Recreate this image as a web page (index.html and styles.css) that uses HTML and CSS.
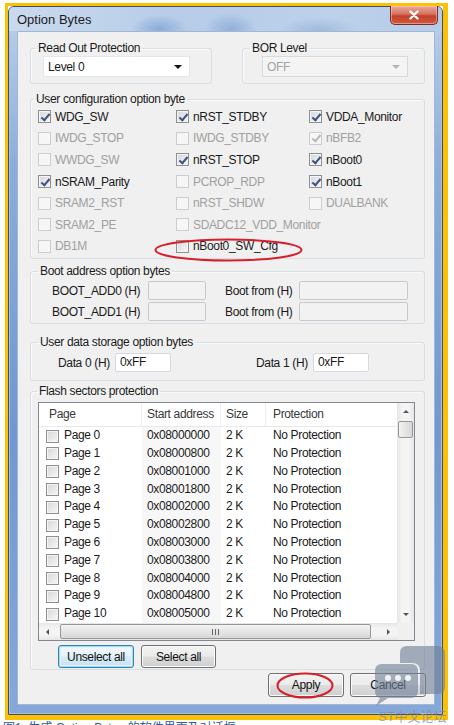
FILE: index.html
```html
<!DOCTYPE html>
<html lang="zh-CN">
<head>
    <meta charset="UTF-8">
    <meta name="viewport" content="width=device-width, initial-scale=1.0">
    <title>Option Bytes</title>
    <link rel="stylesheet" href="styles.css">
</head>
<body>
<div class="page">
    <div class="shot">
        <div class="window">
            <div class="titlebar">
                <span class="title">Option Bytes</span>
                <span class="close-btn">
                    <svg width="14" height="10" viewBox="0 0 14 10"><path d="M3.5 1.5 L10.5 8.5 M10.5 1.5 L3.5 8.5" stroke="#fff" stroke-width="2.4" stroke-linecap="round"/></svg>
                </span>
            </div>

            <div class="client">
                <!-- Read protection / BOR -->
                <div class="top-row">
                    <fieldset class="group rop">
                        <legend>Read Out Protection</legend>
                        <div class="combo"><span>Level 0</span><i class="combo-arrow"></i></div>
                    </fieldset>
                    <fieldset class="group bor">
                        <legend>BOR Level</legend>
                        <div class="combo disabled"><span>OFF</span><i class="combo-arrow"></i></div>
                    </fieldset>
                </div>

                <!-- User option bits -->
                <fieldset class="group user-cfg">
                    <legend>User configuration option byte</legend>
                    <div class="check-grid">
                        <label class="check"><span class="box checked"></span>WDG_SW</label>
                        <label class="check"><span class="box checked"></span>nRST_STDBY</label>
                        <label class="check"><span class="box checked"></span>VDDA_Monitor</label>

                        <label class="check off"><span class="box"></span>IWDG_STOP</label>
                        <label class="check off"><span class="box"></span>IWDG_STDBY</label>
                        <label class="check off"><span class="box checked"></span>nBFB2</label>

                        <label class="check off"><span class="box"></span>WWDG_SW</label>
                        <label class="check"><span class="box checked"></span>nRST_STOP</label>
                        <label class="check"><span class="box checked"></span>nBoot0</label>

                        <label class="check"><span class="box checked"></span>nSRAM_Parity</label>
                        <label class="check off"><span class="box"></span>PCROP_RDP</label>
                        <label class="check"><span class="box checked"></span>nBoot1</label>

                        <label class="check off"><span class="box"></span>SRAM2_RST</label>
                        <label class="check off"><span class="box"></span>nRST_SHDW</label>
                        <label class="check off"><span class="box"></span>DUALBANK</label>

                        <label class="check off"><span class="box"></span>SRAM2_PE</label>
                        <label class="check off"><span class="box"></span>SDADC12_VDD_Monitor</label>
                        <span></span>

                        <label class="check off"><span class="box"></span>DB1M</label>
                        <label class="check"><span class="box"></span>nBoot0_SW_Cfg</label>
                        <span></span>
                    </div>
                </fieldset>

                <!-- Boot addresses -->
                <fieldset class="group boot">
                    <legend>Boot address option bytes</legend>
                    <div class="field-row">
                        <span class="lbl lbl-boot">BOOT_ADD0 (H)</span>
                        <span class="edit disabled w-add"></span>
                        <span class="lbl lbl-from">Boot from (H)</span>
                        <span class="edit disabled w-from"></span>
                    </div>
                    <div class="field-row">
                        <span class="lbl lbl-boot">BOOT_ADD1 (H)</span>
                        <span class="edit disabled w-add"></span>
                        <span class="lbl lbl-from">Boot from (H)</span>
                        <span class="edit disabled w-from"></span>
                    </div>
                </fieldset>

                <!-- User data -->
                <fieldset class="group data">
                    <legend>User data storage option bytes</legend>
                    <div class="field-row">
                        <span class="lbl lbl-data">Data 0 (H)</span>
                        <span class="edit w-data">0xFF</span>
                        <span class="lbl lbl-data2">Data 1 (H)</span>
                        <span class="edit w-data">0xFF</span>
                    </div>
                </fieldset>

                <!-- Write protection per page -->
                <fieldset class="group flash">
                    <legend>Flash sectors protection</legend>
                    <div class="list">
                        <div class="list-body">
                            <div class="lv-head">
                                <span class="c-page">Page</span>
                                <span class="c-addr">Start address</span>
                                <span class="c-size">Size</span>
                                <span class="c-prot">Protection</span>
                            </div>
                            <div class="lv-row"><span class="c-page"><i class="box"></i>Page 0</span><span class="c-addr">0x08000000</span><span class="c-size">2 K</span><span class="c-prot">No Protection</span></div>
                            <div class="lv-row"><span class="c-page"><i class="box"></i>Page 1</span><span class="c-addr">0x08000800</span><span class="c-size">2 K</span><span class="c-prot">No Protection</span></div>
                            <div class="lv-row"><span class="c-page"><i class="box"></i>Page 2</span><span class="c-addr">0x08001000</span><span class="c-size">2 K</span><span class="c-prot">No Protection</span></div>
                            <div class="lv-row"><span class="c-page"><i class="box"></i>Page 3</span><span class="c-addr">0x08001800</span><span class="c-size">2 K</span><span class="c-prot">No Protection</span></div>
                            <div class="lv-row"><span class="c-page"><i class="box"></i>Page 4</span><span class="c-addr">0x08002000</span><span class="c-size">2 K</span><span class="c-prot">No Protection</span></div>
                            <div class="lv-row"><span class="c-page"><i class="box"></i>Page 5</span><span class="c-addr">0x08002800</span><span class="c-size">2 K</span><span class="c-prot">No Protection</span></div>
                            <div class="lv-row"><span class="c-page"><i class="box"></i>Page 6</span><span class="c-addr">0x08003000</span><span class="c-size">2 K</span><span class="c-prot">No Protection</span></div>
                            <div class="lv-row"><span class="c-page"><i class="box"></i>Page 7</span><span class="c-addr">0x08003800</span><span class="c-size">2 K</span><span class="c-prot">No Protection</span></div>
                            <div class="lv-row"><span class="c-page"><i class="box"></i>Page 8</span><span class="c-addr">0x08004000</span><span class="c-size">2 K</span><span class="c-prot">No Protection</span></div>
                            <div class="lv-row"><span class="c-page"><i class="box"></i>Page 9</span><span class="c-addr">0x08004800</span><span class="c-size">2 K</span><span class="c-prot">No Protection</span></div>
                            <div class="lv-row"><span class="c-page"><i class="box"></i>Page 10</span><span class="c-addr">0x08005000</span><span class="c-size">2 K</span><span class="c-prot">No Protection</span></div>
                        </div>
                        <div class="vscroll">
                            <span class="sb-btn"><i class="tri up"></i></span>
                            <span class="sb-thumb v"></span>
                            <span class="sb-fill"></span>
                            <span class="sb-btn"><i class="tri down"></i></span>
                        </div>
                        <div class="hscroll">
                            <span class="sb-btn"><i class="tri left"></i></span>
                            <span class="sb-thumb h"><i class="grip"></i></span>
                            <span class="sb-fill"></span>
                            <span class="sb-btn"><i class="tri right"></i></span>
                        </div>
                        <div class="corner"></div>
                    </div>
                    <div class="btn-row">
                        <button class="btn focus w-unsel">Unselect all</button>
                        <button class="btn w-sel">Select all</button>
                    </div>
                </fieldset>

                <div class="dialog-btns">
                    <button class="btn w-dlg">Apply</button>
                    <button class="btn w-dlg">Cancel</button>
                </div>
            </div>
        </div>
    </div>
    <div class="caption">图1. 生成 Option Bytes 的软件界面及对话框</div>

    <!-- hand-drawn marks over the dialog -->
    <svg class="marks" width="454" height="725" viewBox="0 0 454 725">
        <ellipse cx="228.5" cy="247" rx="73" ry="10.5" fill="none" stroke="#d71f2b" stroke-width="2"/>
        <ellipse cx="305" cy="682.5" rx="27.5" ry="12" fill="none" stroke="#d71f2b" stroke-width="2"/>
        <g fill="#6f7f96" fill-opacity="0.62">
            <path d="M407 643 H437 Q445 643 445 651 V684 Q445 691 438 691 H420 V668 Q420 660 412 660 H400 V650 Q400 643 407 643 Z"/>
            <path d="M382 661 H411 Q418 661 418 668 V688 Q418 695 411 695 H388 L376 703 L380 695 Q375 694 375 688 V668 Q375 661 382 661 Z"/>
        </g>
        <g fill="#fff" fill-opacity="0.85">
            <circle cx="388" cy="675" r="3"/>
            <circle cx="398" cy="675" r="3"/>
            <circle cx="408" cy="675" r="3"/>
        </g>
    </svg>
    <span class="watermark">ST中文论坛</span>
</div>
</body>
</html>
```

FILE: styles.css
```css
* {
    box-sizing: border-box;
}
body {
    margin: 0;
    width: 454px;
    height: 725px;
    overflow: hidden;
    background: #fff;
    font-family: "Liberation Sans", Arial, sans-serif;
    font-size: 12px;
    letter-spacing: -0.35px;
    color: #1a1a1a;
}
.page {
    position: relative;
    width: 454px;
    height: 725px;
}
.shot {
    margin: 3px 0 0 5px;
    width: 443px;
    height: 717px;
    border: solid #fcc102;
    border-width: 3px 5px 5px 3px;
}

/* Aero window frame */
.window {
    height: 100%;
    display: flex;
    flex-direction: column;
    padding: 0 7px 9px 8px;
    border: 1px solid #3f4d66;
    border-radius: 6px 6px 0 0;
    background: linear-gradient(#c3d6ed 0, #b3cae7 30px, #8cadd9 160px, #7098d0 60%, #86a8d9 100%);
    box-shadow: inset 1px 0 0 #a9c1e4, inset -1px 0 0 #a9c1e4, inset 0 -1px 0 #a9c1e4;
}
.titlebar {
    position: relative;
    height: 24px;
    margin: 0 -7px 0 -8px;
    padding: 1px 0 0 8px;
    background:
        radial-gradient(ellipse 28px 14px at 150px 22px, rgba(70, 120, 190, 0.4), transparent),
        radial-gradient(ellipse 26px 16px at 222px 22px, rgba(70, 120, 190, 0.35), transparent),
        radial-gradient(ellipse 40px 14px at 310px 24px, rgba(90, 130, 190, 0.3), transparent),
        linear-gradient(to right, #c9daee, #b6cce8 40%, #bdd1ea 75%, #b5cbe8);
    border-radius: 5px 5px 0 0;
}
.title {
    font-size: 13px;
    letter-spacing: 0;
    line-height: 23px;
    color: #1b1b1b;
}
.close-btn {
    position: absolute;
    top: -1px;
    right: 4px;
    width: 48px;
    height: 19px;
    display: flex;
    align-items: center;
    justify-content: center;
    border: 1px solid #7d2a20;
    border-top: none;
    border-radius: 0 0 5px 5px;
    background: linear-gradient(#e9a99b 0%, #d7725f 45%, #c2402a 55%, #d05a40 100%);
    box-shadow: inset 0 0 0 1px rgba(255, 210, 200, 0.5);
}

/* dialog body */
.client {
    flex: 1;
    display: flex;
    flex-direction: column;
    padding: 9px 9px 0 12px;
    background: #f0f0f0;
    border: 1px solid #a3b7d3;
}
.group {
    margin: 0;
    padding: 0;
    min-width: 0;
    border: 1px solid #d5dfe5;
    border-radius: 3px;
    box-shadow: inset 1px 1px 0 #fafafa;
}
.group legend {
    margin-left: 5px;
    padding: 0 2px;
    line-height: 14px;
    color: #1a1a1a;
}

.top-row {
    display: flex;
    justify-content: space-between;
}
.rop {
    width: 182px;
    padding-bottom: 6px;
}
.rop .combo {
    margin: 1px 0 0 12px;
}
.bor {
    width: 183px;
    padding-bottom: 6px;
}
.bor legend {
    margin-left: 7px;
}
.bor .combo {
    margin: 1px 0 0 19px;
}
.combo {
    display: flex;
    align-items: center;
    justify-content: space-between;
    width: 147px;
    height: 21px;
    padding: 0 7px 0 4px;
    background: #fff;
    border: 1px solid #e4e6ea;
}
.combo-arrow {
    width: 0;
    height: 0;
    border-left: 4px solid transparent;
    border-right: 4px solid transparent;
    border-top: 4px solid #111;
}
.combo.disabled {
    width: 146px;
    background: #f4f4f4;
    border-color: #d9d9d9;
    color: #a3a3a3;
}
.combo.disabled .combo-arrow {
    border-top-color: #b5b5b5;
}

/* option bit checkboxes */
.user-cfg {
    margin-top: 8px;
    padding-bottom: 1px;
}
.user-cfg legend {
    margin-left: 3px;
}
.check-grid {
    display: grid;
    grid-template-columns: 138px 133px 1fr;
    grid-auto-rows: 21.6px;
    padding-left: 7px;
}
.check {
    display: flex;
    align-items: center;
    gap: 4px;
    white-space: nowrap;
}
.check.off {
    color: #a0a0a0;
}
.box {
    position: relative;
    flex: none;
    display: inline-block;
    width: 13px;
    height: 13px;
    border: 1px solid #8e8f8f;
    background: linear-gradient(135deg, #d4d7dc, #f7f7f7);
    box-shadow: inset 0 0 0 1px #f4f4f4;
}
.off .box {
    border-color: #cdcdcd;
    background: #f6f6f6;
    box-shadow: none;
}
.box.checked::after {
    content: "";
    position: absolute;
    left: 3.5px;
    top: 0.5px;
    width: 3px;
    height: 7px;
    border: solid #3c5281;
    border-width: 0 2px 2px 0;
    transform: rotate(40deg);
}
.off .box.checked::after {
    border-color: #b9b9b9;
}

/* boot address + user data edits */
.boot {
    margin-top: 5px;
    padding: 3px 0 2px 21px;
}
.boot legend {
    margin-left: -14px;
}
.boot .field-row + .field-row {
    margin-top: 2px;
}
.field-row {
    display: flex;
    align-items: center;
    height: 19px;
}
.lbl {
    flex: none;
}
.lbl-boot {
    width: 96px;
}
.lbl-from {
    width: 74px;
    margin-left: 19px;
}
.edit {
    height: 19px;
    padding: 0 4px;
    line-height: 17px;
    background: #fff;
    border: 1px solid #d7d9de;
    border-radius: 2px;
}
.edit.disabled {
    background: #f2f2f2;
    border-color: #c8c9cc;
}
.w-add {
    width: 58px;
}
.w-from {
    width: 109px;
}
.w-data {
    width: 56px;
}
.data {
    margin-top: 11px;
    padding: 4px 0 8px 27px;
}
.data legend {
    margin-left: -20px;
}
.lbl-data {
    width: 57px;
}
.lbl-data2 {
    width: 57px;
    margin-left: 85px;
}

/* page list */
.flash {
    margin-top: 3px;
    padding: 4px 0 1px 7px;
}
.flash legend {
    margin-left: -1px;
}
.list {
    display: grid;
    grid-template-columns: 358px 17px;
    grid-template-rows: 220px 17px;
    width: 377px;
    border: 1px solid #828790;
    background: #fff;
}
.list-body {
    overflow: hidden;
}
.lv-head,
.lv-row {
    display: flex;
    white-space: nowrap;
}
.lv-head {
    height: 24px;
    line-height: 23px;
    color: #383838;
    border-bottom: 1px solid #e8eaee;
}
.lv-head span {
    border-right: 1px solid #eceef1;
}
.lv-row {
    height: 17.8px;
    line-height: 17.8px;
}
.c-page {
    width: 103px;
    flex: none;
    padding-left: 10px;
}
.c-addr {
    width: 79px;
    flex: none;
    padding-left: 5px;
}
.c-size {
    width: 45px;
    flex: none;
    padding-left: 5px;
}
.c-prot {
    flex: none;
    width: 140px;
    padding-left: 7px;
}
.lv-row .c-page {
    display: flex;
    align-items: center;
    gap: 5px;
    padding-left: 7px;
}
.lv-row .c-addr {
    background: #f7f7f7;
}
.lv-row .box {
    width: 13px;
    height: 13px;
}

/* scrollbars */
.vscroll,
.hscroll {
    display: flex;
    background: linear-gradient(to right, #e6e6e6, #f4f4f4 30%, #f4f4f4 70%, #e6e6e6);
}
.vscroll {
    flex-direction: column;
}
.hscroll {
    background: linear-gradient(#e6e6e6, #f4f4f4 30%, #f4f4f4 70%, #e6e6e6);
}
.sb-btn {
    flex: none;
    width: 17px;
    height: 17px;
    display: flex;
    align-items: center;
    justify-content: center;
}
.sb-fill {
    flex: 1;
}
.sb-thumb {
    flex: none;
    border: 1px solid #979797;
    border-radius: 2px;
    background: linear-gradient(to right, #f3f3f3, #e5e5e5 50%, #d7d7d7);
}
.sb-thumb.v {
    height: 17px;
    margin: 1px 1px 0;
}
.sb-thumb.h {
    width: 311px;
    margin: 1px 0 1px 4px;
    display: flex;
    align-items: center;
    justify-content: center;
    background: linear-gradient(#f3f3f3, #e5e5e5 50%, #d7d7d7);
}
.grip {
    width: 7px;
    height: 6px;
    background: repeating-linear-gradient(to right, #6a6a6a 0 1px, transparent 1px 3px);
}
.tri {
    width: 0;
    height: 0;
    border: 3.5px solid transparent;
}
.tri.up {
    border-bottom: 3.5px solid #555;
    border-top-width: 0;
}
.tri.down {
    border-top: 3.5px solid #555;
    border-bottom-width: 0;
}
.tri.left {
    border-right: 3.5px solid #555;
    border-left-width: 0;
}
.tri.right {
    border-left: 3.5px solid #555;
    border-right-width: 0;
}
.corner {
    background: #f0f0f0;
}

/* push buttons */
.btn {
    height: 23px;
    padding: 0;
    font-family: "Liberation Sans", Arial, sans-serif;
    font-size: 12px;
    letter-spacing: -0.35px;
    color: #111;
    border: 1px solid #707070;
    border-radius: 3px;
    background: linear-gradient(#f2f2f2 0%, #ebebeb 48%, #dddddd 52%, #cfcfcf 100%);
    box-shadow: inset 0 0 0 1px #fbfbfb;
}
.btn.focus {
    border-color: #3c7fb1;
    box-shadow: inset 0 0 0 1px #9ddcf6, inset 0 0 0 2px #e4f4fc;
    background: linear-gradient(#f1f8fc 0%, #e6f3fa 48%, #d6ebf6 52%, #c8e2f1 100%);
}
.btn-row {
    display: flex;
    gap: 7px;
    margin-top: 4px;
    padding-left: 20px;
}
.w-unsel {
    width: 76px;
}
.w-sel {
    width: 75px;
}
.dialog-btns {
    display: flex;
    justify-content: flex-end;
    gap: 6px;
    margin: 3px -1px 0 0;
}
.w-dlg {
    width: 76px;
    height: 24px;
}

/* figure caption under the screenshot, runs off the bottom edge */
.caption {
    margin: 1px 0 0 3px;
    font-size: 12px;
    letter-spacing: 0;
    line-height: 14px;
    color: #2f5aa0;
    white-space: nowrap;
    font-family: "Liberation Sans", "Noto Sans CJK SC", sans-serif;
}

/* overlays */
.marks {
    position: absolute;
    left: 0;
    top: 0;
    pointer-events: none;
}
.watermark {
    position: absolute;
    left: 378px;
    top: 703px;
    font-family: "Liberation Sans", "Noto Sans CJK SC", sans-serif;
    font-size: 13px;
    letter-spacing: 0;
    color: rgba(120, 140, 175, 0.75);
}
```
